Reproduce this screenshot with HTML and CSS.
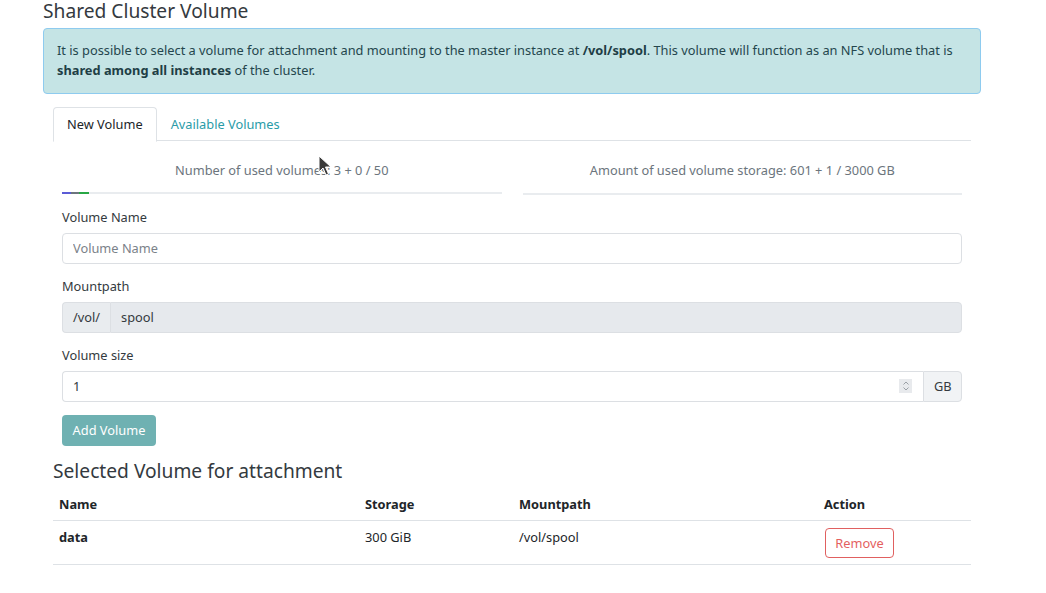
FILE: index.html
```html
<!DOCTYPE html>
<html>
<head>
<meta charset="utf-8">
<link rel="stylesheet" href="styles.css">
</head>
<body>
<div class="page">
  <h2 class="title">Shared Cluster Volume</h2>
  <div class="alert">It is possible to select a volume for attachment and mounting to the master instance at <b>/vol/spool</b>. This volume will function as an NFS volume that is <b>shared among all instances</b> of the cluster.</div>

  <div class="card">
    <div class="tabs">
      <div class="tab active">New Volume</div>
      <div class="tab link">Available Volumes</div>
    </div>
    <div class="pane">
      <div class="stats">
        <div class="stat">
          <div class="stat-text">Number of used volumes: 3 + 0 / 50</div>
          <div class="progress">
            <span class="seg seg-blue"></span><span class="seg seg-gray"></span><span class="seg seg-green"></span>
          </div>
        </div>
        <div class="stat">
          <div class="stat-text">Amount of used volume storage: 601 + 1 / 3000 GB</div>
          <div class="progress progress-low"></div>
        </div>
      </div>

      <div class="field">
        <label class="label">Volume Name</label>
        <input class="input" type="text" placeholder="Volume Name">
      </div>
      <div class="field">
        <label class="label">Mountpath</label>
        <div class="group">
          <span class="addon addon-left">/vol/</span>
          <input class="input input-disabled" type="text" value="spool" disabled>
        </div>
      </div>
      <div class="field">
        <label class="label">Volume size</label>
        <div class="group">
          <div class="numwrap">
            <input class="input input-num" type="text" value="1">
            <span class="spin"><svg width="10" height="12" viewBox="0 0 10 12"><path d="M2.5 4.5 L5 2 L7.5 4.5 M2.5 7.5 L5 10 L7.5 7.5" fill="none" stroke="#9aa0a6" stroke-width="1"/></svg></span>
          </div>
          <span class="addon addon-right">GB</span>
        </div>
      </div>
      <button class="btn-add">Add Volume</button>
    </div>

    <h3 class="subtitle">Selected Volume for attachment</h3>
    <table class="table">
      <thead>
        <tr><th class="c1">Name</th><th class="c2">Storage</th><th class="c3">Mountpath</th><th class="c4">Action</th></tr>
      </thead>
      <tbody>
        <tr><td class="strong">data</td><td>300 GiB</td><td>/vol/spool</td><td><button class="btn-remove">Remove</button></td></tr>
      </tbody>
    </table>
  </div>
</div>
<svg class="cursor" width="14" height="22" viewBox="0 0 14 22"><path d="M1 1 L1 17 L5 13 L8 20 L10.5 19 L7.5 12 L13 12 Z" fill="#3a3a3a" stroke="#ffffff" stroke-width="1"/></svg>
</body>
</html>
```

FILE: styles.css
```css
html, body {
  margin: 0;
  padding: 0;
  background: #ffffff;
}
body {
  font-family: "Noto Sans", "Open Sans", sans-serif;
  font-size: 12.8px;
  color: #212529;
  position: relative;
  width: 1046px;
  height: 593px;
  overflow: hidden;
}
.page {
  padding-left: 43px;
  width: 938px;
}
.title {
  margin: 0;
  font-size: 19.2px;
  font-weight: 400;
  line-height: 21px;
  color: #343a40;
}
.alert {
  margin-top: 7px;
  background: #c5e4e5;
  border: 1px solid #8ecbef;
  border-radius: 4px;
  padding: 12px 13px 13px 13px;
  line-height: 19.5px;
  color: #24464d;
}
.alert b { color: #1e3e45; }
.card {
  margin: 13px 10px 0 10px;
}
.tabs {
  display: flex;
  border-bottom: 1px solid #dee2e6;
  height: 33px;
}
.tab {
  padding: 7px 13px 0 13px;
  height: 26px;
  line-height: 18px;
  border: 1px solid transparent;
  border-top-left-radius: 4px;
  border-top-right-radius: 4px;
  color: #212529;
}
.tab.active {
  border-color: #dee2e6 #dee2e6 #ffffff;
  background: #fff;
}
.tab.link { color: #2a9ca8; padding-left: 13px; }
.pane {
  padding: 0 9px;
}
.stats {
  display: flex;
  gap: 21px;
  padding-top: 19px;
}
.stat { flex: 1; }
.stat-text {
  text-align: center;
  color: #6c757d;
  line-height: 20px;
  height: 20px;
}
.progress {
  margin-top: 12px;
  height: 2px;
  background: #e9ecef;
  display: flex;
}
.progress-low { margin-top: 13px; }
.seg { height: 2px; display: block; }
.seg-blue { width: 9px; background: #5b5bd6; }
.seg-gray { width: 8px; background: #6c757d; }
.seg-green { width: 10px; background: #28a745; }
.field { margin-top: 12px; }
.field + .field { margin-top: 12px; }
.label {
  display: block;
  line-height: 20px;
  color: #343a40;
  margin-bottom: 6px;
}
.input {
  box-sizing: border-box;
  display: block;
  width: 100%;
  height: 31px;
  border: 1px solid #dcdfe3;
  border-radius: 4px;
  padding: 0 10px 1px 10px;
  font-family: inherit;
  font-size: 12.8px;
  color: #343a40;
  background: #fff;
  outline: none;
}
.input::placeholder { color: #7b8289; }
.group {
  display: flex;
}
.addon {
  box-sizing: border-box;
  height: 31px;
  line-height: 29px;
  border: 1px solid #dcdfe3;
  background: #e9ecef;
  color: #343a40;
  padding: 0 10px;
}
.addon-left {
  border-radius: 4px 0 0 4px;
  border-right: none;
  width: 48px;
}
.addon-right {
  border-radius: 0 4px 4px 0;
  border-left: 1px solid #dcdfe3;
  width: 39px;
  background: #f1f3f5;
}
.group .input { flex: 1; }
.addon-left + .input {
  border-radius: 0 4px 4px 0;
  border-left: 1px solid #dcdfe3;
}
.input-disabled {
  background: #e6e9ed;
  color: #343a40;
  opacity: 1;
}
.numwrap {
  flex: 1;
  position: relative;
}
.input-num {
  border-radius: 4px 0 0 4px;
  border-right: none;
}
.spin {
  position: absolute;
  right: 11px;
  top: 8px;
  width: 13px;
  height: 14px;
  background: #e8eaed;
  display: flex;
  align-items: center;
  justify-content: center;
}
.btn-add {
  margin-top: 13px;
  height: 31px;
  width: 94px;
  border: none;
  border-radius: 4px;
  background: #6fb1b2;
  color: #ffffff;
  font-family: inherit;
  font-size: 12.8px;
  padding: 0 0 1px 0;
}
.subtitle {
  margin: 13px 0 0 0;
  font-size: 19.2px;
  font-weight: 400;
  line-height: 24px;
  color: #343a40;
}
.table {
  margin-top: 7px;
  width: 918px;
  border-collapse: collapse;
  color: #212529;
}
.table th {
  text-align: left;
  font-weight: 700;
  padding: 6px 6px 7px 6px;
  line-height: 17px;
  border-bottom: 1px solid #dee2e6;
}
.table td {
  text-align: left;
  vertical-align: top;
  padding: 8px 6px 6px 6px;
  line-height: 17px;
  height: 29px;
  border-bottom: 1px solid #dee2e6;
}
.c1 { width: 294px; }
.c2 { width: 142px; }
.c3 { width: 293px; }
.strong { font-weight: 700; }
.btn-remove {
  margin-top: -1px;
  margin-left: 1px;
  height: 30px;
  width: 69px;
  border: 1px solid #e06060;
  border-radius: 4px;
  background: #fff;
  color: #e45f5f;
  font-family: inherit;
  font-size: 12.8px;
  padding: 0;
}
.cursor {
  position: absolute;
  left: 318px;
  top: 155px;
}
```
